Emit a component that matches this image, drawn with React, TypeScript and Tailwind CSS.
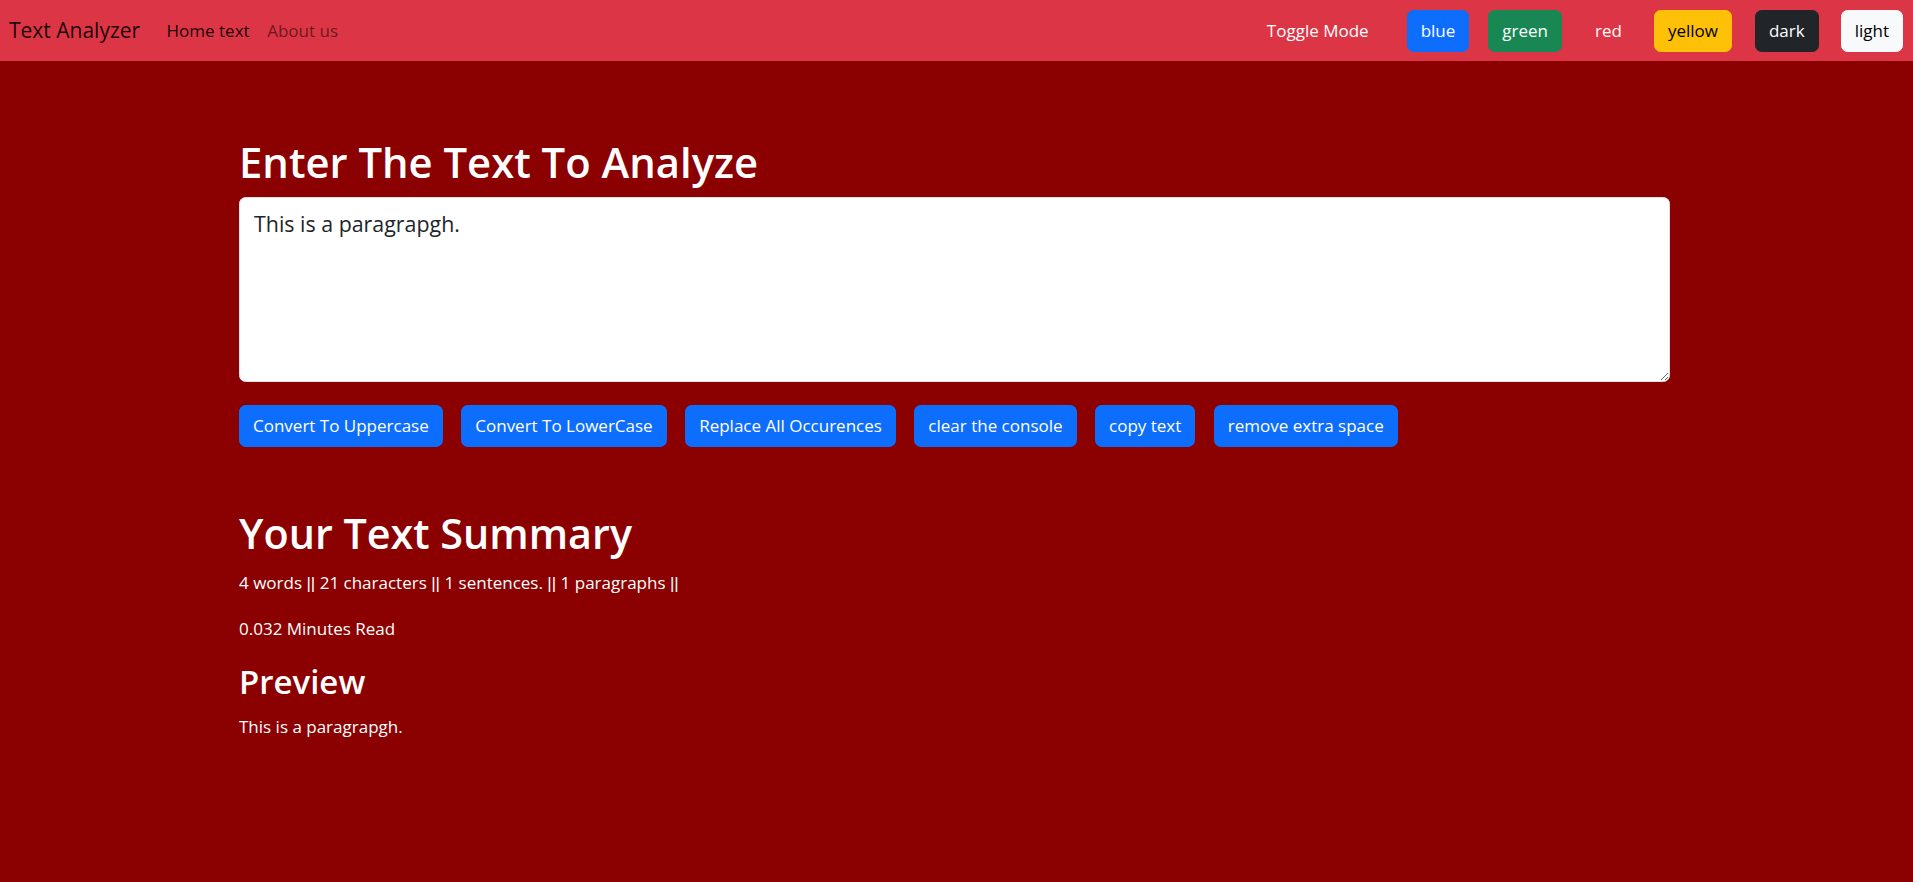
import React from "react";

const navBtns = [
  { label: "blue", cls: "bg-[#0d6efd] border-[#0d6efd] text-white", ml: "ml-[38px]" },
  { label: "green", cls: "bg-[#198754] border-[#198754] text-white", ml: "ml-[19px]" },
  { label: "red", cls: "bg-[#dc3545] border-[#dc3545] text-white", ml: "ml-[19px]" },
  { label: "yellow", cls: "bg-[#ffc107] border-[#ffc107] text-black", ml: "ml-[18px]" },
  { label: "dark", cls: "bg-[#212529] border-[#212529] text-white", ml: "ml-[23px]" },
  { label: "light", cls: "bg-[#f8f9fa] border-[#f8f9fa] text-black", ml: "ml-[22px]" },
];

const actions = [
  "Convert To Uppercase",
  "Convert To LowerCase",
  "Replace All Occurences",
  "clear the console",
  "copy text",
  "remove extra space",
];

function Bars() {
  return <span className="font-['Liberation_Sans',sans-serif]">||</span>;
}

export default function App() {
  return (
    <div className="min-h-screen bg-[#8b0000] font-['Open_Sans',sans-serif]">
      <nav className="h-[61px] bg-[#dc3545] flex items-center pl-[9px] pr-[10px]">
        <span className="text-[21px] text-black/90 mr-[17.6px]">Text Analyzer</span>
        <a className="px-[8.8px] text-[17px] text-black/90">Home text</a>
        <a className="px-[8.8px] text-[17px] text-black/55">About us</a>
        <div className="ml-auto flex items-center">
          <span className="text-white text-[17px]">Toggle Mode</span>
          {navBtns.map((b) => (
            <button
              key={b.label}
              className={`${b.ml} ${b.cls} h-[42px] px-[13px] border rounded-[6.6px] text-[17px] leading-[26px]`}
            >
              {b.label}
            </button>
          ))}
        </div>
      </nav>

      <main className="w-[1431px] ml-[239px] pt-[75px]">
        <h1 className="text-[41.8px] leading-[52px] font-semibold text-white mb-[8.8px]">
          Enter The Text To Analyze
        </h1>
        <textarea
          className="block w-full h-[185px] bg-white border border-[#dee2e6] rounded-[6.6px] px-[14px] py-[8.8px] text-[21.4px] leading-[33px] text-[#212529] outline-none"
          defaultValue="This is a paragrapgh."
        />
        <div className="flex gap-[18.5px] mt-[23px]">
          {actions.map((a) => (
            <button
              key={a}
              className="h-[42px] px-[13px] bg-[#0d6efd] border border-[#0d6efd] text-white rounded-[6.6px] text-[17px] leading-[26px]"
            >
              {a}
            </button>
          ))}
        </div>

        <h1 className="mt-[60px] text-[41.3px] leading-[52.8px] font-semibold text-white mb-[10.5px]">
          Your Text Summary
        </h1>
        <p className="text-white text-[17px] leading-[26.4px] mb-[18.5px]">
          4 words <Bars /> 21 characters <Bars /> 1 sentences. <Bars /> 1 paragraphs <Bars />
        </p>
        <p className="text-white text-[17px] leading-[26.4px] mb-[19px]">0.032 Minutes Read</p>
        <h2 className="text-[33px] leading-[42.24px] font-semibold text-white mb-[10px] mt-[2px]">Preview</h2>
        <p className="text-white text-[17px] leading-[26.4px]">This is a paragrapgh.</p>
      </main>
    </div>
  );
}
